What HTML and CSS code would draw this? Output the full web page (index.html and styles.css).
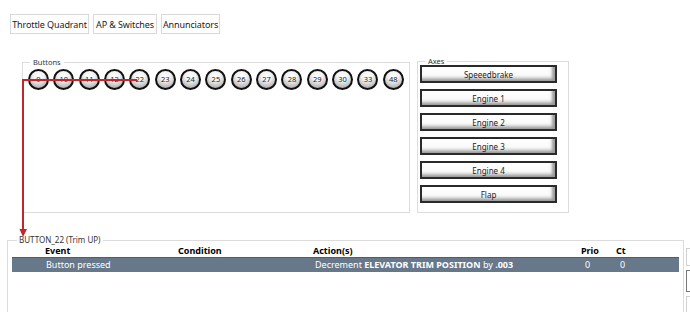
FILE: index.html
```html
<!DOCTYPE html>
<html>
<head>
    <title>Button Mapping</title>
    <link rel="stylesheet" href="styles.css">
</head>
<body>
    <div class="tabs">
        <button class="tab tab-wide">Throttle Quadrant</button>
        <button class="tab tab-mid">AP &amp; Switches</button>
        <button class="tab tab-mid2">Annunciators</button>
    </div>

    <div class="panels">
        <fieldset class="group buttons-group">
            <legend>Buttons</legend>
            <div class="knobs">
                <span class="knob">9</span>
                <span class="knob">10</span>
                <span class="knob">11</span>
                <span class="knob">12</span>
                <span class="knob">22</span>
                <span class="knob">23</span>
                <span class="knob">24</span>
                <span class="knob">25</span>
                <span class="knob">26</span>
                <span class="knob">27</span>
                <span class="knob">28</span>
                <span class="knob">29</span>
                <span class="knob">30</span>
                <span class="knob">33</span>
                <span class="knob">48</span>
            </div>
        </fieldset>
        <fieldset class="group axes-group">
            <legend>Axes</legend>
            <div class="axes">
                <button class="axis">Speeedbrake</button>
                <button class="axis">Engine 1</button>
                <button class="axis">Engine 2</button>
                <button class="axis">Engine 3</button>
                <button class="axis">Engine 4</button>
                <button class="axis">Flap</button>
            </div>
        </fieldset>
    </div>

    <div class="bottom">
        <fieldset class="group events-group">
            <legend>BUTTON_22 (Trim UP)</legend>
            <div class="grid head">
                <span class="c-event">Event</span>
                <span>Condition</span>
                <span>Action(s)</span>
                <span>Prio</span>
                <span>Ct</span>
            </div>
            <div class="grid row selected">
                <span class="c-event">Button pressed</span>
                <span></span>
                <span class="c-action">Decrement <b>ELEVATOR TRIM POSITION</b> by <b>.003</b></span>
                <span class="c-num">0</span>
                <span class="c-num">0</span>
            </div>
        </fieldset>
        <div class="side">
            <span class="side-btn"></span>
            <span class="side-btn dark"></span>
            <span class="side-btn"></span>
        </div>
    </div>

    <svg class="link" width="690" height="312" viewBox="0 0 690 312">
        <path d="M137 80 H23 V231" fill="none" stroke="#c0262c" stroke-width="2"/>
        <polygon points="19.5,229 27,229 23,237" fill="#c0262c"/>
    </svg>
</body>
</html>
```

FILE: styles.css
```css
body {
    margin: 0;
    font-family: "Noto Sans", "Open Sans", sans-serif;
    background: #fff;
    color: #000;
    position: relative;
    width: 690px;
    height: 312px;
    overflow: hidden;
}

.tabs {
    display: flex;
    gap: 4px;
    padding: 14px 0 0 10px;
}

.tab {
    height: 20px;
    padding: 0;
    border: 1px solid #d9d9d9;
    background: #fff;
    font-family: inherit;
    font-size: 9px;
    letter-spacing: -0.1px;
    white-space: nowrap;
    color: #222;
}

.tab-wide { width: 79px; }
.tab-mid { width: 64px; }
.tab-mid2 { width: 59px; }

.panels {
    display: flex;
    gap: 7px;
    padding: 23px 0 0 22px;
}

.group {
    margin: 0;
    padding: 0;
    border: 1px solid #dcdcdc;
    min-width: 0;
}

.group legend {
    font-size: 7.5px;
    line-height: 10px;
    padding: 0 3px;
    margin-left: 7px;
    color: #333;
}

.buttons-group {
    width: 388px;
    height: 156px;
    box-sizing: border-box;
}

.knobs {
    display: flex;
    gap: 4.35px;
    padding: 2px 0 0 5px;
}

.knob {
    width: 21px;
    height: 21px;
    box-sizing: border-box;
    border: 2px solid #111;
    border-radius: 50%;
    background: radial-gradient(circle at 50% 30%, #fff 0%, #f2f2f2 35%, #b9b9b9 75%, #8e8e8e 100%);
    font-size: 7.5px;
    line-height: 17px;
    text-align: center;
    color: #222;
    flex: none;
}

.axes-group {
    width: 152px;
    height: 156px;
    box-sizing: border-box;
}

.axes-group legend {
    line-height: 8px;
    margin-bottom: 1px;
}

.axes {
    display: flex;
    flex-direction: column;
    gap: 6px;
    margin-top: -1px;
    padding-left: 2px;
}

.axis {
    width: 137px;
    height: 18px;
    padding: 0;
    border: 2px solid #2a2a2a;
    background: linear-gradient(#fff, #fafafa 55%, #cfcfcf);
    box-shadow: inset -3px -2px 3px #9a9a9a;
    font-family: inherit;
    font-size: 8px;
    color: #222;
}

.bottom {
    display: flex;
    gap: 2px;
    padding: 23px 0 0 7px;
}

.events-group {
    flex: none;
    width: 677px;
    height: 90px;
    box-sizing: border-box;
    padding: 0 4px;
}

.events-group legend {
    font-size: 8px;
    line-height: 8px;
    margin-left: 5px;
    padding: 0 2px;
}

.grid {
    display: grid;
    grid-template-columns: 166px 135px 268px 35px 1fr;
    font-size: 9px;
}

.head {
    font-weight: bold;
    margin-top: 2px;
    line-height: 10px;
    height: 11px;
}

.c-event {
    padding-left: 33px;
}

.row {
    height: 14px;
    line-height: 14px;
}

.selected {
    background: #67788b;
    border-top: 1px solid #4e5d6e;
    color: #fff;
}

.selected .c-event {
    padding-left: 34px;
}

.c-action {
    padding-left: 2px;
    white-space: nowrap;
}

.c-num {
    padding-left: 4px;
}

.side {
    flex: none;
    display: flex;
    flex-direction: column;
    gap: 4px;
    padding-top: 12px;
}

.side-btn {
    width: 12px;
    height: 16px;
    border: 1px solid #d0d0d0;
    background: #fff;
}

.side-btn.dark {
    height: 20px;
    border-color: #777;
}

.link {
    position: absolute;
    left: 0;
    top: 0;
    pointer-events: none;
}
```
